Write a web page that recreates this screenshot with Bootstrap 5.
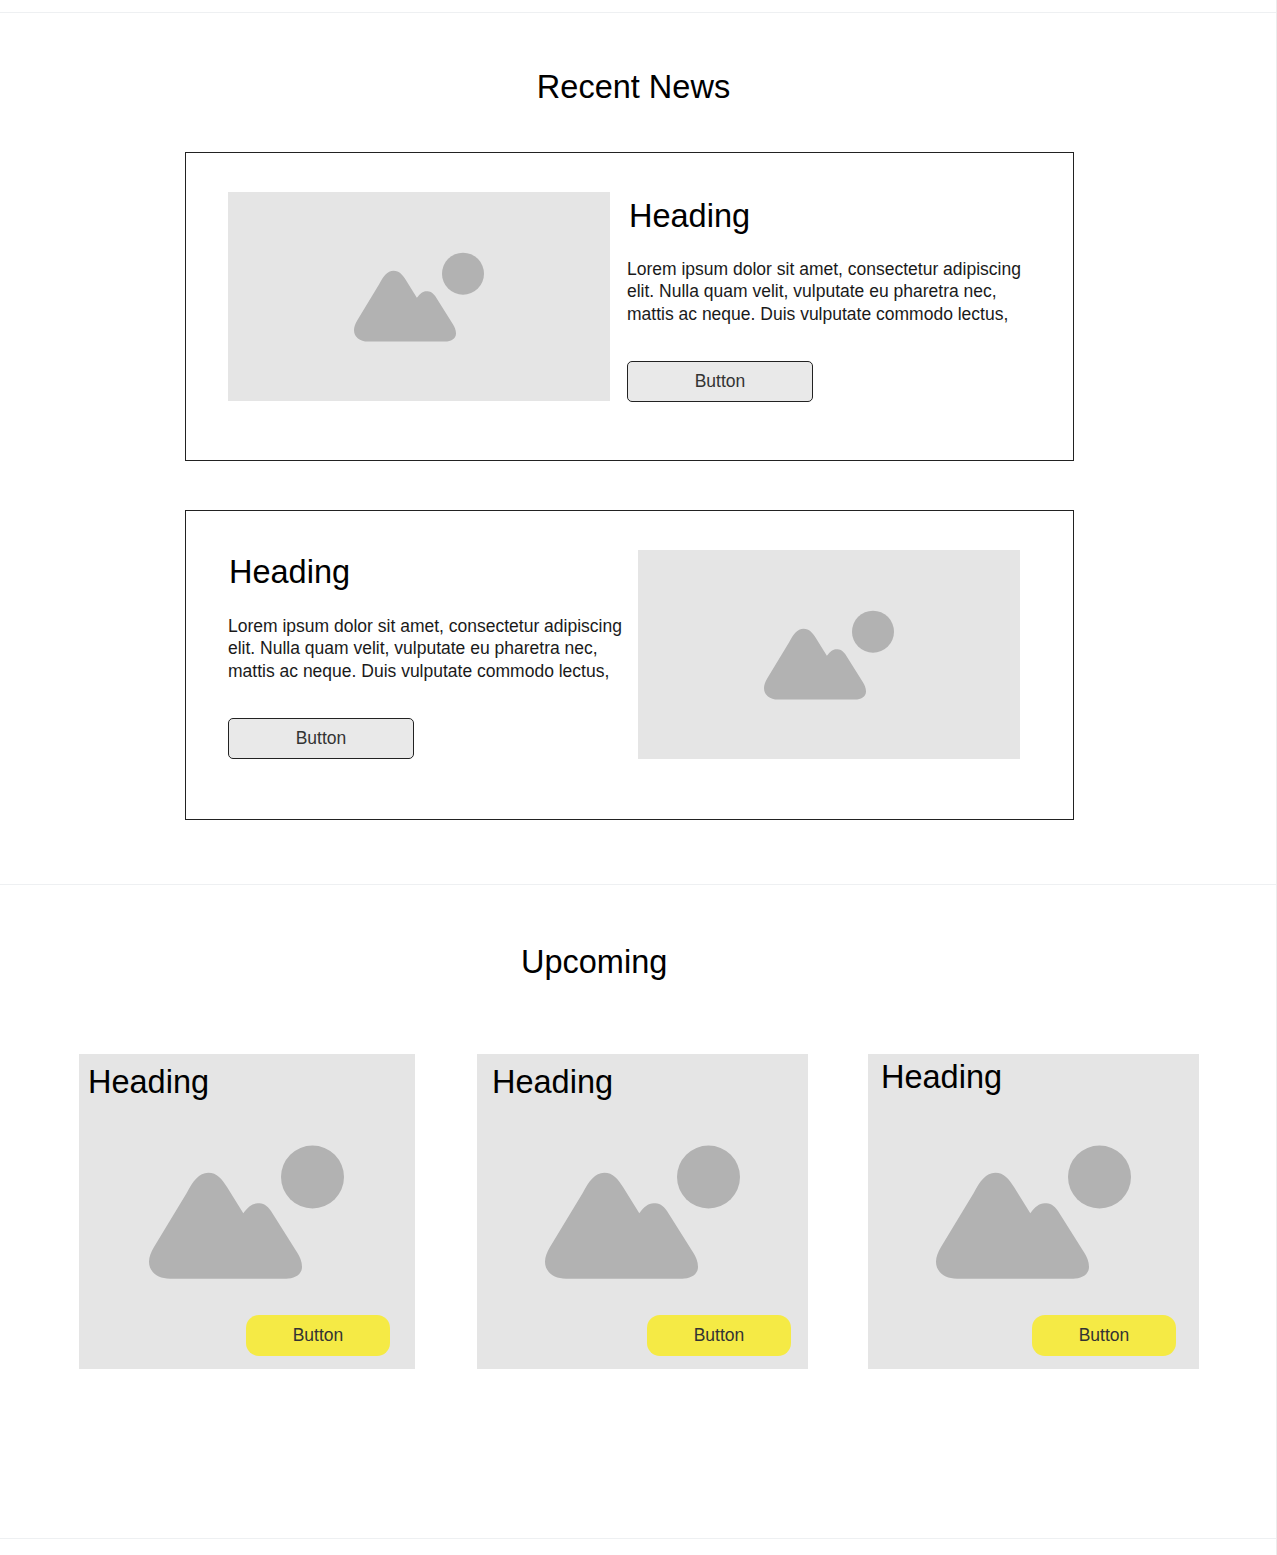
<!DOCTYPE html>
<html lang="en"><head><meta charset="utf-8"><title>News</title>
<link href="https://cdn.jsdelivr.net/npm/bootstrap@5.3.0/dist/css/bootstrap.min.css" rel="stylesheet">
<style>
body{font-family:"Liberation Sans",Arial,sans-serif;color:#000;background:#fff;}
.page-frame{height:1555px;border-right:1px solid #ececec;padding-top:12px;}
.band{border-top:1px solid #eef0f2;}
.band-news{height:872px;padding-top:55px;}
.band-up{height:654px;padding-top:58px;}
.sec-title{font-size:32.5px;line-height:38px;font-weight:400;margin:0;}
.title-news{text-align:center;width:1267px;margin-bottom:46px;}
.title-up{margin-left:521px;margin-bottom:73px;}
.story{width:889px;margin-left:185px;border:1px solid #222;}
.story-a{height:309px;padding:39px 0 0 42px;margin-bottom:49px;}
.story-b{height:310px;padding:39px 0 0 42px;}
.thumb{width:382px;height:209px;background:#e5e5e5;flex:none;}
.icon-s{width:130px;height:90px;}
.icon-l{width:195px;height:134px;}
.pic-fill{fill:#b2b2b2;}
.story-copy-a{margin-left:17px;width:410px;}
.story-copy-b{width:410px;}
.hd{font-size:32.5px;line-height:38px;font-weight:400;margin:0;color:#000;}
.hd-a{margin:5px 0 0 2px;}
.hd-b{margin:3px 0 0 1px;}
.body-copy{font-size:17.5px;line-height:22.4px;color:#1a1a1a;margin:23px 0 0;}
.hd-b + .body-copy{margin-top:24px;}
.btn-plain{display:block;width:186px;height:41px;padding:0;margin-top:36px;font-size:17.5px;line-height:39px;color:#333;background:#e9e9e9;border:1px solid #222;border-radius:5px;}
.tiles{align-items:flex-start;}
.tile{height:315px;background:#e5e5e5;flex:none;}
.tile-1{width:336px;margin-left:79px;}
.tile-2{width:331px;margin-left:62px;}
.tile-3{width:331px;margin-left:60px;}
.tile-1 .hd{margin:9px 0 0 9px;}
.tile-2 .hd{margin:9px 0 0 15px;}
.tile-3 .hd{margin:4px 0 0 13px;}
.tile-pic{margin-top:44px;}
.tile-1 .tile-pic{padding-right:1px;}
.tile-3 .tile-pic{margin-top:49px;}
.btn-sun{display:block;width:144px;height:41px;padding:0;margin-top:36px;font-size:17.5px;line-height:41px;color:#333;background:#f5ea45;border:0;border-radius:13px;}
.tile-1 .btn-sun{margin-left:167px;}
.tile-2 .btn-sun{margin-left:170px;}
.tile-3 .btn-sun{margin-left:164px;}
</style></head>
<body class="m-0">
<svg width="0" height="0" class="position-absolute"><defs>
<symbol id="pic" viewBox="0 0 195 134"><circle class="pic-fill" cx="163.5" cy="32" r="31.5"/><path class="pic-fill" d="M94.3 68.3C99 62 103 58.3 108.7 58.3C114 58.3 118 60 122 66L147.7 106.7C151 112 153 116.5 153 121.7C153 130 145 133.7 137 133.7L21 133.7C9 133.7 0 127 0 116.7C0 112 2 107 5 102L37.7 48C44 36 50 27.7 59.3 27.7C68 27.7 73 34 78 42Z"/></symbol>
</defs></svg>
<div class="page-frame">
<section class="band band-news">
<h2 class="sec-title title-news">Recent News</h2>
<div class="story story-a d-flex">
<div class="thumb d-flex align-items-center justify-content-center"><svg class="icon-s"><use href="#pic"/></svg></div>
<div class="story-copy-a">
<h3 class="hd hd-a">Heading</h3>
<p class="body-copy">Lorem ipsum dolor sit amet, consectetur adipiscing elit. Nulla quam velit, vulputate eu pharetra nec, mattis ac neque. Duis vulputate commodo lectus,</p>
<button class="btn-plain" type="button">Button</button>
</div></div>
<div class="story story-b d-flex">
<div class="story-copy-b">
<h3 class="hd hd-b">Heading</h3>
<p class="body-copy">Lorem ipsum dolor sit amet, consectetur adipiscing elit. Nulla quam velit, vulputate eu pharetra nec, mattis ac neque. Duis vulputate commodo lectus,</p>
<button class="btn-plain" type="button">Button</button>
</div>
<div class="thumb d-flex align-items-center justify-content-center"><svg class="icon-s"><use href="#pic"/></svg></div>
</div>
</section>
<section class="band band-up">
<h2 class="sec-title title-up">Upcoming</h2>
<div class="tiles d-flex">
<div class="tile tile-1"><h3 class="hd">Heading</h3><div class="tile-pic d-flex justify-content-center"><svg class="icon-l"><use href="#pic"/></svg></div><button class="btn-sun" type="button">Button</button></div>
<div class="tile tile-2"><h3 class="hd">Heading</h3><div class="tile-pic d-flex justify-content-center"><svg class="icon-l"><use href="#pic"/></svg></div><button class="btn-sun" type="button">Button</button></div>
<div class="tile tile-3"><h3 class="hd">Heading</h3><div class="tile-pic d-flex justify-content-center"><svg class="icon-l"><use href="#pic"/></svg></div><button class="btn-sun" type="button">Button</button></div>
</div>
</section>
<div class="band"></div>
</div>
</body></html>
